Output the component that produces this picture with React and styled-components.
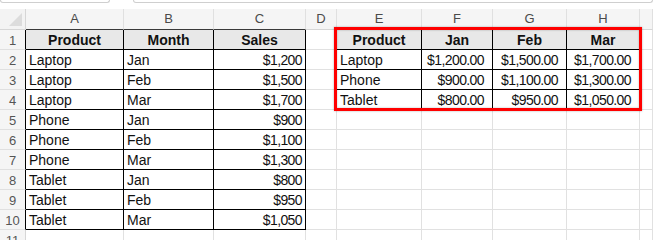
import React from 'react';
import styled, {createGlobalStyle, css} from 'styled-components';

const GlobalStyle = createGlobalStyle`
  html, body {
    margin: 0;
    padding: 0;
    background: #ffffff;
    overflow: hidden;
  }
  body {
    font-family: "Liberation Sans", Arial, sans-serif;
  }
`;

const Page = styled.div`
  width: 653px;
  height: 240px;
  overflow: hidden;
  background: #ffffff;
`;

const TopBar = styled.div`
  display: flex;
  gap: 23px;
  height: 9px;
`;

const FieldEdge = styled.div`
  height: 2px;
  width: ${(p) => (p.$grow ? 'auto' : '108px')};
  flex: ${(p) => (p.$grow ? '1' : 'none')};
  border: 1px solid #cfcfcf;
  border-top: none;
  border-radius: 0 0 4px 4px;
`;

const Sheet = styled.div`
  display: grid;
  grid-template-columns: 26px 98px 90px 92px 31px 85px 71px 74px 73px 1fr;
  grid-auto-rows: 20px;
  grid-template-rows: 21px;
`;

const Corner = styled.div`
  box-sizing: border-box;
  background: #f3f3f3;
  border-right: 1px solid #d6d6d6;
  border-bottom: 1px solid #d6d6d6;
  position: relative;

  &::after{
    content: '';
    position: absolute;
    right: 3px;
    bottom: 3px;
    width: 0;
    height: 0;
    border-left: 13px solid transparent;
    border-bottom: 13px solid #dcdcdc;
  }
`;

const ColHead = styled.div`
  box-sizing: border-box;
  display: flex;
  align-items: center;
  justify-content: center;
  padding-bottom: 1px;
  background: #f5f5f5;
  color: #4a4a4a;
  font-size: 13px;
  border-right: 1px solid #e0e0e0;
  border-bottom: 1px solid ${(p) => (p.$edge ? '#3a3a3a' : '#d6d6d6')};
`;

const RowHead = styled.div`
  box-sizing: border-box;
  display: flex;
  align-items: center;
  justify-content: center;
  background: #f5f5f5;
  color: #555555;
  font-size: 13px;
  padding-top: 1px;
  border-bottom: 1px solid #e0e0e0;
  border-right: 1px solid ${(p) => (p.$edge ? '#000000' : '#d6d6d6')};
`;

const Cell = styled.div`
  box-sizing: border-box;
  position: relative;
  display: flex;
  align-items: center;
  padding: 1px 3px 0 3px;
  font-size: 14px;
  color: #111111;
  white-space: nowrap;
  border-right: 1px solid #e1e1e1;
  border-bottom: 1px solid #e1e1e1;

  ${(p) => p.$boxed && css`
    border-right-color: #000000;
    border-bottom-color: #000000;
  `}

  ${(p) => p.$leftOf && css`
    border-right-color: #000000;
  `}

  ${(p) => p.$head && css`
    background: #e8e8e8;
    font-weight: bold;
    justify-content: center;
  `}

  ${(p) => p.$num && css`
    justify-content: flex-end;
    letter-spacing: -0.6px;
  `}

  ${(p) => p.$money && css`
    justify-content: flex-end;
    letter-spacing: -0.6px;
    padding-right: 8px;
  `}
`;

/* red selection frame drawn over the E1:H4 range, anchored to E1 */
const Highlight = styled.div`
  position: absolute;
  left: -3px;
  top: -3px;
  width: 308px;
  height: 84px;
  box-sizing: border-box;
  border: 3px solid #ff0000;
  box-shadow: 0 0 2px rgba(0, 0, 0, 0.3), inset 0 0 2px rgba(0, 0, 0, 0.3);
  pointer-events: none;
  z-index: 2;
`;

const columns = ['A', 'B', 'C', 'D', 'E', 'F', 'G', 'H', ''];

const sales = [
  ['Laptop', 'Jan', '$1,200'],
  ['Laptop', 'Feb', '$1,500'],
  ['Laptop', 'Mar', '$1,700'],
  ['Phone', 'Jan', '$900'],
  ['Phone', 'Feb', '$1,100'],
  ['Phone', 'Mar', '$1,300'],
  ['Tablet', 'Jan', '$800'],
  ['Tablet', 'Feb', '$950'],
  ['Tablet', 'Mar', '$1,050'],
];

const pivot = [
  ['Laptop', '$1,200.00', '$1,500.00', '$1,700.00'],
  ['Phone', '$900.00', '$1,100.00', '$1,300.00'],
  ['Tablet', '$800.00', '$950.00', '$1,050.00'],
];

function renderRow(r) {
  // r is the sheet row number, starting at 1
  const cells = [];
  const inSales = r <= 10;
  const inPivot = r <= 4;

  if (inSales) {
    if (r === 1) {
      ['Product', 'Month', 'Sales'].forEach((t) => cells.push(<Cell key={t} $boxed $head>{t}</Cell>));
    } else {
      const [p, m, s] = sales[r - 2];
      cells.push(<Cell key="a" $boxed>{p}</Cell>);
      cells.push(<Cell key="b" $boxed>{m}</Cell>);
      cells.push(<Cell key="c" $boxed $num>{s}</Cell>);
    }
  } else {
    cells.push(<Cell key="a" />, <Cell key="b" />, <Cell key="c" />);
  }

  cells.push(<Cell key="d" $leftOf={inPivot} />);

  if (inPivot) {
    if (r === 1) {
      cells.push(
        <Cell key="pProduct" $boxed $head>
          Product
          <Highlight />
        </Cell>
      );
      ['Jan', 'Feb', 'Mar'].forEach((t) => cells.push(<Cell key={'p' + t} $boxed $head>{t}</Cell>));
    } else {
      const [p, ...vals] = pivot[r - 2];
      cells.push(<Cell key="e" $boxed>{p}</Cell>);
      vals.forEach((v, i) => cells.push(<Cell key={'v' + i} $boxed $money>{v}</Cell>));
    }
  } else {
    cells.push(<Cell key="e" />, <Cell key="f" />, <Cell key="g" />, <Cell key="h" />);
  }

  cells.push(<Cell key="i" />);

  return (
    <React.Fragment key={r}>
      <RowHead $edge={inSales}>{r}</RowHead>
      {cells}
    </React.Fragment>
  );
}

export default function App() {
  const rowNumbers = Array.from({length: 11}, (_, i) => i + 1);

  return (
    <Page>
      <GlobalStyle />
      <TopBar>
        <FieldEdge />
        <FieldEdge $grow />
      </TopBar>
      <Sheet>
        <Corner />
        {columns.map((c, i) => (
          <ColHead key={i} $edge={(i <= 2) || (i >= 4 && i <= 7)}>{c}</ColHead>
        ))}
        {rowNumbers.map(renderRow)}
      </Sheet>
    </Page>
  );
}
